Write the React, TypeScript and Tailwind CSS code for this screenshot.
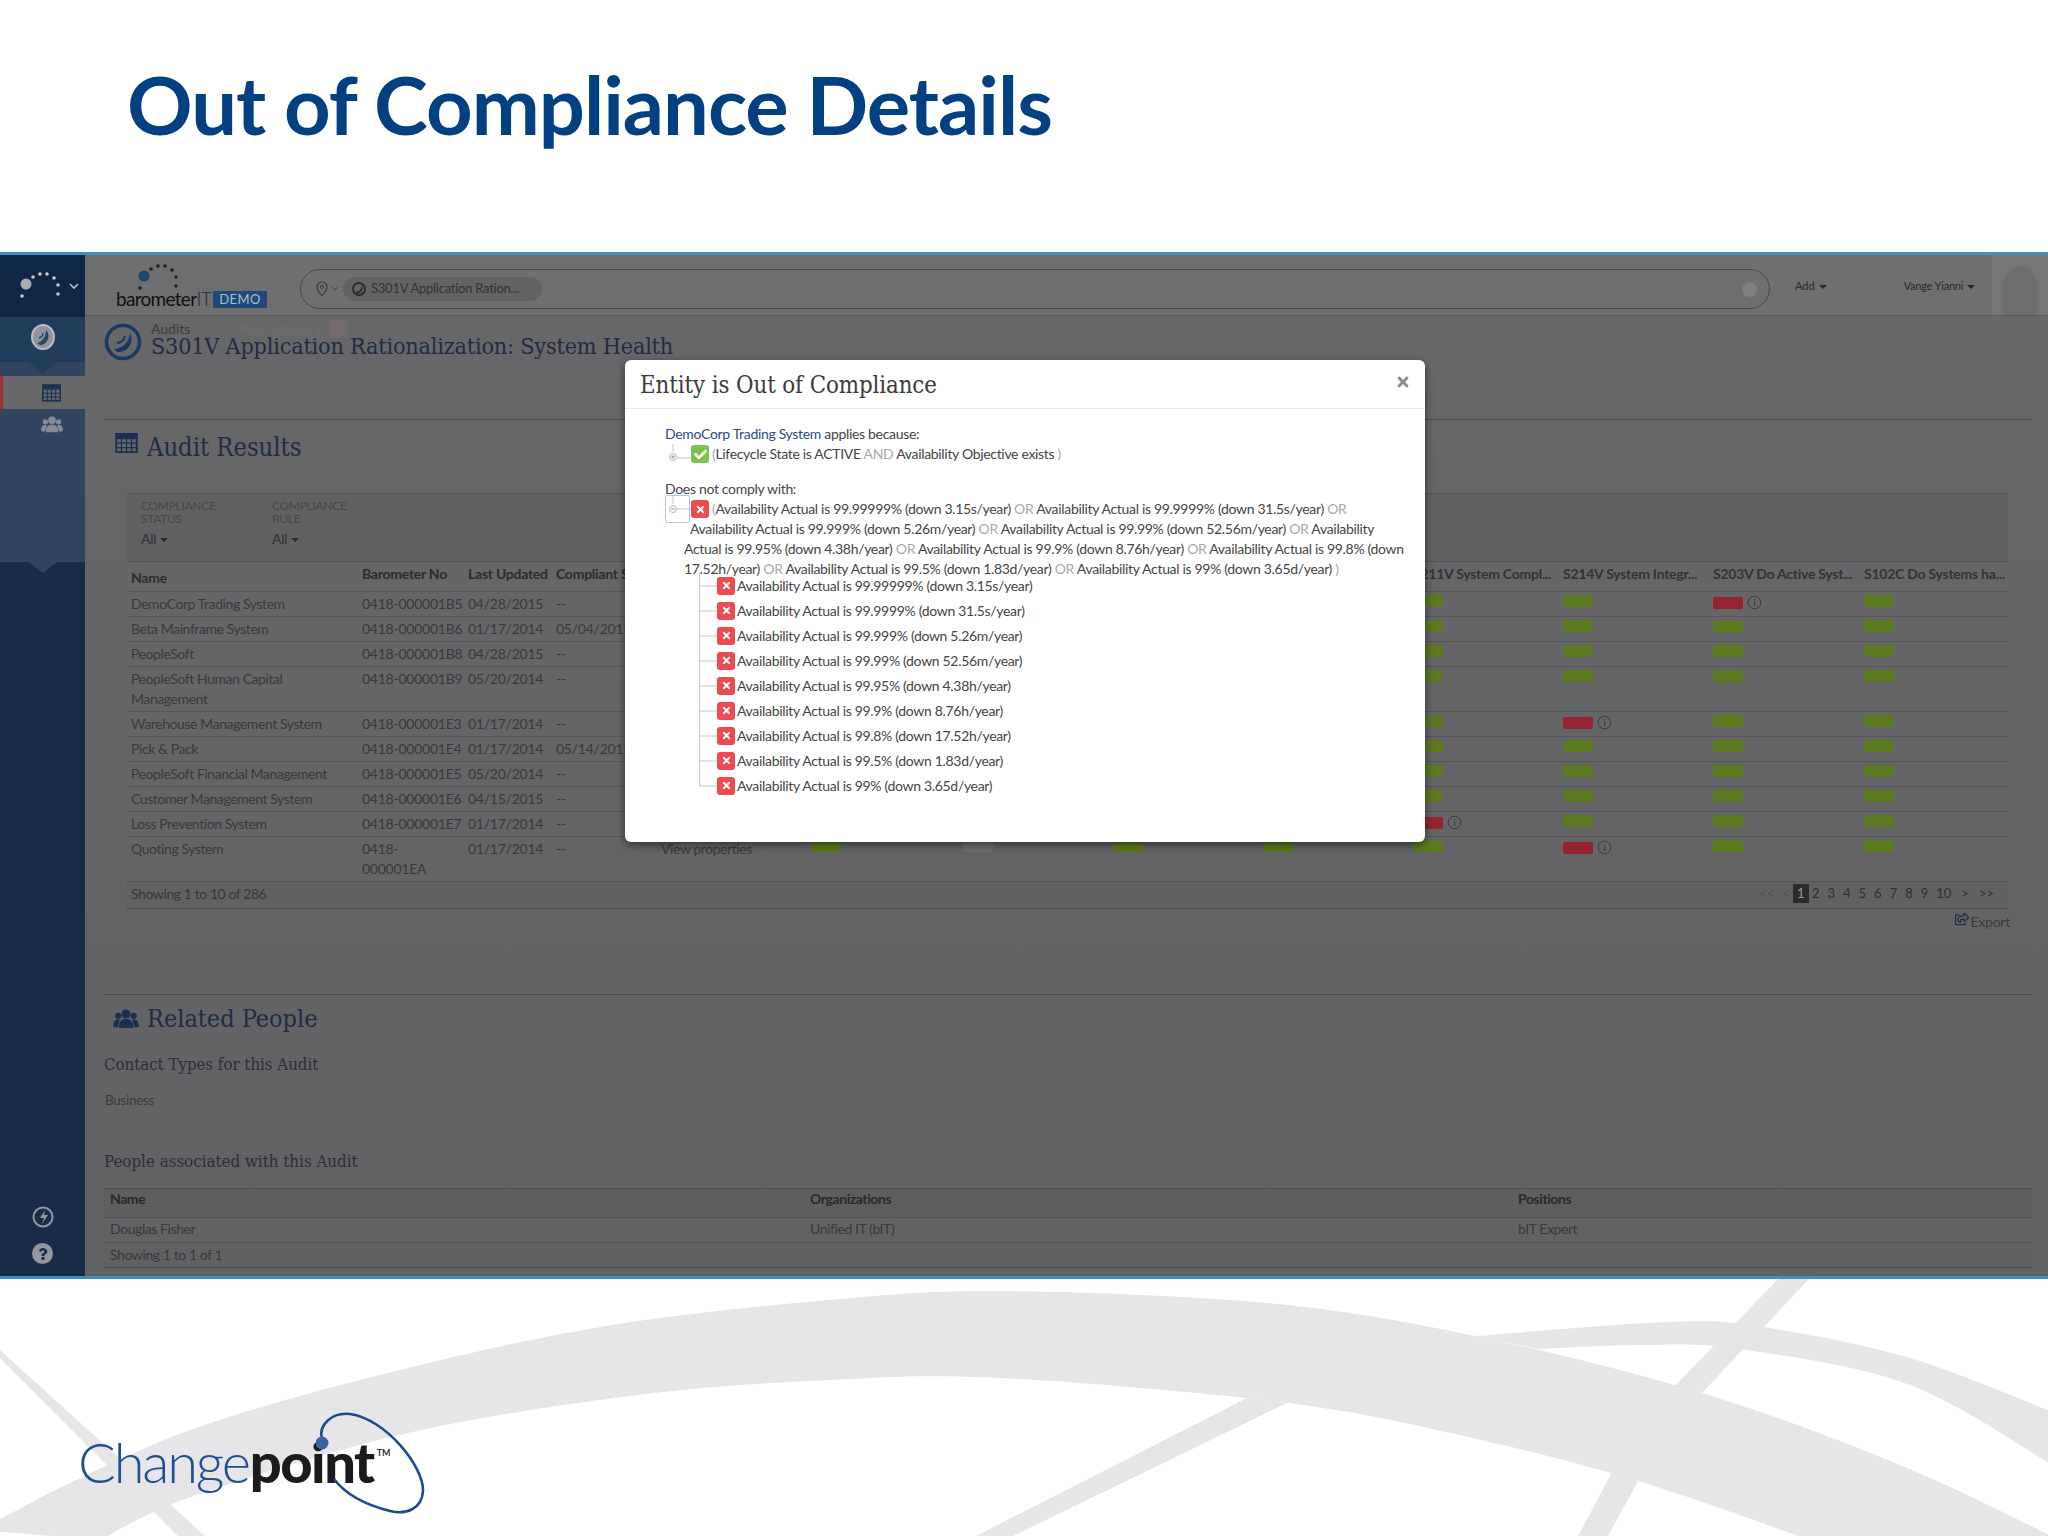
import React from "react";
import { FaCheck, FaTimes, FaRegShareSquare, FaQuestion } from "react-icons/fa";

const SLAB = "font-['DejaVu_Serif'] [font-stretch:condensed]";

type S = "g" | "r" | "x" | "n";
const rows: { name: string[]; no: string[]; upd: string; comp: string; view?: boolean; st: S[] }[] = [
  { name: ["DemoCorp Trading System"], no: ["0418-000001B5"], upd: "04/28/2015", comp: "--", st: ["g", "g", "r", "g"] },
  { name: ["Beta Mainframe System"], no: ["0418-000001B6"], upd: "01/17/2014", comp: "05/04/2015", st: ["g", "g", "g", "g"] },
  { name: ["PeopleSoft"], no: ["0418-000001B8"], upd: "04/28/2015", comp: "--", st: ["g", "g", "g", "g"] },
  { name: ["PeopleSoft Human Capital", "Management"], no: ["0418-000001B9"], upd: "05/20/2014", comp: "--", st: ["g", "g", "g", "g"] },
  { name: ["Warehouse Management System"], no: ["0418-000001E3"], upd: "01/17/2014", comp: "--", st: ["g", "r", "g", "g"] },
  { name: ["Pick & Pack"], no: ["0418-000001E4"], upd: "01/17/2014", comp: "05/14/2015", st: ["g", "g", "g", "g"] },
  { name: ["PeopleSoft Financial Management"], no: ["0418-000001E5"], upd: "05/20/2014", comp: "--", st: ["g", "g", "g", "g"] },
  { name: ["Customer Management System"], no: ["0418-000001E6"], upd: "04/15/2015", comp: "--", st: ["g", "g", "g", "g"] },
  { name: ["Loss Prevention System"], no: ["0418-000001E7"], upd: "01/17/2014", comp: "--", st: ["r", "g", "g", "g"] },
  { name: ["Quoting System"], no: ["0418-", "000001EA"], upd: "01/17/2014", comp: "--", view: true, st: ["g", "r", "g", "g"] },
];

const GRID = "grid grid-cols-[235px_106px_88px_105px_150px_152px_150px_150px_150px_150px_150px_151px_1fr] items-start";

function GridIcon({ w, h, c }: { w: number; h: number; c: string }) {
  return (
    <svg width={w} height={h} viewBox="0 0 20 18" className="shrink-0">
      <rect x="0.8" y="0.8" width="18.4" height="16.4" fill="none" stroke={c} strokeWidth="1.6" />
      <path d="M0 5H20M0 9.2H20M0 13.2H20M5.5 5V18M10 5V18M14.5 5V18" stroke={c} strokeWidth="1.1" />
      <rect x="0" y="0" width="20" height="4.5" fill={c} />
    </svg>
  );
}

function PeopleIcon({ w, h, c }: { w: number; h: number; c: string }) {
  return (
    <svg width={w} height={h} viewBox="0 0 28 22" className="shrink-0">
      <circle cx="5.5" cy="7.5" r="3.4" fill={c} />
      <circle cx="22.5" cy="7.5" r="3.4" fill={c} />
      <path d="M0 19C0 13.5 2 11.5 5.5 11.5L7 11.5L5 20H1Z" fill={c} />
      <path d="M28 19C28 13.5 26 11.5 22.5 11.5L21 11.5L23 20H27Z" fill={c} />
      <circle cx="14" cy="5.5" r="5" fill={c} />
      <path d="M6 21C6 13.5 9 11 14 11C19 11 22 13.5 22 21Z" fill={c} />
    </svg>
  );
}

function Info() {
  return (
    <svg width="15" height="15" viewBox="0 0 15 15" className="shrink-0">
      <circle cx="7.5" cy="7.5" r="6.3" fill="none" stroke="#3d3d3d" strokeWidth="1" />
      <rect x="7" y="6.5" width="1.2" height="4.5" fill="#3d3d3d" />
      <rect x="7" y="4" width="1.2" height="1.3" fill="#3d3d3d" />
    </svg>
  );
}

function Bar({ s }: { s: S }) {
  if (s === "n") return <div />;
  const c = s === "g" ? "bg-[#5c7a20]" : s === "r" ? "bg-[#962330]" : "bg-[#6f6f71]";
  return (
    <div className="flex items-center gap-[4px] pt-[1px]">
      <div className={`w-[30px] h-[12px] rounded-[2px] ${c}`} />
      {s === "r" && <Info />}
    </div>
  );
}

function TableRow({ r }: { r: (typeof rows)[number] }) {
  const mid: S[] = r.view ? ["g", "x", "g", "g"] : ["n", "n", "n", "n"];
  return (
    <div className={`${GRID} border-b border-[#565658] pt-[2px] pb-[2px] text-[14px] leading-[20px] text-[#3a3a3c] tracking-[-0.42px]`}>
      <div className="pl-[4px]">{r.name.map((n) => <div key={n}>{n}</div>)}</div>
      <div className="tracking-[-0.25px]">{r.no.map((n) => <div key={n}>{n}</div>)}</div>
      <div className="tracking-[-0.25px]">{r.upd}</div>
      <div className="tracking-[-0.25px]">{r.comp}</div>
      <div>{r.view ? "View properties" : ""}</div>
      {mid.map((s, i) => <Bar key={i} s={s} />)}
      {r.st.map((s, i) => <Bar key={"s" + i} s={s} />)}
      <div />
    </div>
  );
}

function RedX({ size = 18 }: { size?: number }) {
  return (
    <span className="inline-flex shrink-0 items-center justify-center rounded-[3px] bg-[#ee4b50] text-white" style={{ width: size, height: size }}>
      <FaTimes size={11} />
    </span>
  );
}

function Op({ children }: { children: React.ReactNode }) {
  return <span className="text-[#a9a9a9]">{children}</span>;
}

const children = [
  "99.99999% (down 3.15s/year)",
  "99.9999% (down 31.5s/year)",
  "99.999% (down 5.26m/year)",
  "99.99% (down 52.56m/year)",
  "99.95% (down 4.38h/year)",
  "99.9% (down 8.76h/year)",
  "99.8% (down 17.52h/year)",
  "99.5% (down 1.83d/year)",
  "99% (down 3.65d/year)",
];

function Modal() {
  return (
    <div className="absolute left-[625px] top-[360px] w-[800px] h-[482px] rounded-[6px] bg-white shadow-[0_3px_9px_rgba(0,0,0,0.5)] z-10 font-['Lato',sans-serif] text-[14px] leading-[20px] text-[#454545] tracking-[-0.32px]">
      <div className="flex items-center justify-between h-[49px] border-b border-[#e8e8e8] pl-[15px] pr-[14px]">
        <div className={`${SLAB} text-[23.8px] tracking-[-0.1px] text-[#3b3b3b] pt-[1px]`}>Entity is Out of Compliance</div>
        <FaTimes size={16} className="text-[#8c8c8c] mb-[5px]" />
      </div>
      <div className="pl-[40px] pt-[15px]">
        <div><span className="text-[#2b4a8b]">DemoCorp Trading System</span> applies because:</div>
        <div className="flex items-center h-[20px]">
          <svg width="26" height="20" viewBox="0 0 26 20" className="shrink-0">
            <path d="M8 0V8M12 14H26" stroke="#c4c4c4" fill="none" />
            <circle cx="8" cy="13" r="3.5" fill="none" stroke="#b5b5b5" />
            <path d="M6 13H10M8 11V15" stroke="#999" />
          </svg>
          <span className="inline-flex shrink-0 items-center justify-center w-[18px] h-[18px] rounded-[3px] bg-[#7cc24c] text-white"><FaCheck size={13} /></span>
          <span className="ml-[3px] whitespace-nowrap"><Op>(</Op>Lifecycle State is ACTIVE <Op>AND</Op> Availability Objective exists <Op>)</Op></span>
        </div>
        <div className="mt-[15px]">Does not comply with:</div>
        <div className="whitespace-nowrap">
          <div className="flex items-center h-[20px]">
            <svg width="26" height="28" viewBox="0 0 26 28" className="shrink-0 -mt-[4px] -mb-[4px]">
              <rect x="0.5" y="0.5" width="24" height="27" rx="2" fill="none" stroke="#a9c6ef" />
              <path d="M8 1V9M12 14H26" stroke="#c4c4c4" fill="none" />
              <circle cx="8" cy="14" r="3.5" fill="none" stroke="#b5b5b5" />
              <path d="M6 14H10" stroke="#999" />
            </svg>
            <RedX />
            <span className="ml-[3px]"><Op>(</Op>Availability Actual is 99.99999% (down 3.15s/year) <Op>OR</Op> Availability Actual is 99.9999% (down 31.5s/year) <Op>OR</Op></span>
          </div>
          <div className="ml-[25px]">Availability Actual is 99.999% (down 5.26m/year) <Op>OR</Op> Availability Actual is 99.99% (down 52.56m/year) <Op>OR</Op> Availability</div>
          <div className="ml-[19px]">Actual is 99.95% (down 4.38h/year) <Op>OR</Op> Availability Actual is 99.9% (down 8.76h/year) <Op>OR</Op> Availability Actual is 99.8% (down</div>
          <div className="ml-[19px]">17.52h/year) <Op>OR</Op> Availability Actual is 99.5% (down 1.83d/year) <Op>OR</Op> Availability Actual is 99% (down 3.65d/year) <Op>)</Op></div>
        </div>
        <div className="ml-[34px] -mt-[6px]">
          {children.map((c, i) => (
            <div key={c} className="flex items-center h-[25px]">
              <svg width="18" height="25" viewBox="0 0 18 25" className="shrink-0">
                <path d={i === children.length - 1 ? "M0.5 0V13H18" : "M0.5 0V25M0.5 13H18"} stroke="#c8c8c8" fill="none" />
              </svg>
              <RedX />
              <span className="ml-[2px] whitespace-nowrap">Availability Actual is {c}</span>
            </div>
          ))}
        </div>
      </div>
    </div>
  );
}

function smooth(pts: number[][]) {
  let d = "";
  for (let i = 0; i < pts.length - 1; i++) {
    const p0 = pts[i - 1] || pts[i];
    const p1 = pts[i];
    const p2 = pts[i + 1];
    const p3 = pts[i + 2] || p2;
    const c1 = [p1[0] + (p2[0] - p0[0]) / 6, p1[1] + (p2[1] - p0[1]) / 6];
    const c2 = [p2[0] - (p3[0] - p1[0]) / 6, p2[1] - (p3[1] - p1[1]) / 6];
    d += `C${c1[0]} ${c1[1]} ${c2[0]} ${c2[1]} ${p2[0]} ${p2[1]} `;
  }
  return d;
}

function Swooshes() {
  const up = [[-20, 1530], [80, 1478], [210, 1423], [408, 1368], [612, 1325], [829, 1300], [1000, 1291], [1267, 1303], [1475, 1336], [1702, 1393], [1900, 1465], [2060, 1540]];
  const low = [[1810, 1540], [1638, 1481], [1468, 1437], [1287, 1403], [1000, 1378], [829, 1380], [638, 1395], [408, 1433], [191, 1497], [100, 1540]];
  const archOut = [[1475, 1336], [1668, 1322], [1762, 1327], [1910, 1358], [2060, 1415]];
  const archIn = [[2060, 1470], [1910, 1385], [1739, 1349], [1642, 1345], [1538, 1349]];
  return (
    <svg className="absolute left-0 top-0" width="2048" height="1536" viewBox="0 0 2048 1536">
      <g fill="#e6e6e8">
        <path d={`M${up[0].join(" ")} ${smooth(up)} L${low[0].join(" ")} ${smooth(low)} Z`} />
        <path d={`M${archOut[0].join(" ")} ${smooth(archOut)} L${archIn[0].join(" ")} ${smooth(archIn)} Z`} />
        <path d="M1779 1278 L1810 1278 L1702 1393 L1674 1387 Z" />
        <path d="M1612 1472 L1638 1481 L1608 1536 L1578 1536 Z" />
        <path d="M1247 1398 L1287 1403 L1013 1536 L976 1536 Z" />
        <path d="M0 1350 L205 1536 L178 1536 L0 1358 Z" />
      </g>
    </svg>
  );
}

function Dots({ big = "#4a4a4c", small = "#4a4a4c" }: { big?: string; small?: string }) {
  return (
    <svg width="46" height="30" viewBox="0 0 46 30">
      <circle cx="6" cy="13" r="5.5" fill={big} />
      <circle cx="13" cy="6" r="1.8" fill={small} />
      <circle cx="20" cy="3" r="1.8" fill={small} />
      <circle cx="27" cy="3" r="1.8" fill={small} />
      <circle cx="34" cy="7" r="1.8" fill={small} />
      <circle cx="38" cy="14" r="1.8" fill={small} />
      <circle cx="38" cy="23" r="1.8" fill={small} />
      <circle cx="2" cy="25" r="1.8" fill={small} />
    </svg>
  );
}

function Down({ c = "#2a2a2c" }: { c?: string }) {
  return <span className="inline-block w-0 h-0 border-x-[4px] border-x-transparent border-t-[4px] ml-[4px] align-middle" style={{ borderTopColor: c }} />;
}

function Sidebar() {
  return (
    <div className="w-[85px] shrink-0 flex flex-col bg-[#192c47]">
      <div className="h-[62px] bg-[#0f2644] flex items-center pl-[20px] gap-[3px]">
        <Dots big="#a9adb3" small="#c9ccd1" />
        <svg width="10" height="7" viewBox="0 0 10 7"><path d="M1 1L5 5L9 1" stroke="#b9bcc2" strokeWidth="1.6" fill="none" /></svg>
      </div>
      <div className="h-[45px] bg-[#223c5b] flex items-start justify-center pt-[6px]">
        <svg width="26" height="28" viewBox="0 0 26 28">
          <ellipse cx="13" cy="14" rx="11" ry="12" fill="#8f949c" stroke="#b8bbc0" strokeWidth="2" />
          <path d="M7 20C12 19 16 14 16 7C21 12 18 22 10 22Z" fill="#2a4566" />
          <path d="M9 15C12 14 13 12 13 10" stroke="#2a4566" strokeWidth="1.4" fill="none" />
        </svg>
      </div>
      <div className="h-[14px] bg-[#31455f] flex justify-center">
        <div className="w-0 h-0 border-x-[14px] border-x-transparent border-t-[12px] border-t-[#223c5b]" />
      </div>
      <div className="h-[33px] bg-[#67676a] border-l-[3px] border-[#9c3433] flex items-center pl-[39px]">
        <GridIcon w={19} h={18} c="#1b3350" />
      </div>
      <div className="h-[153px] bg-[#31455f] pt-[7px] pl-[41px]">
        <PeopleIcon w={22} h={17} c="#878b93" />
      </div>
      <div className="flex justify-center">
        <div className="w-0 h-0 border-x-[14px] border-x-transparent border-t-[11px] border-t-[#31455f]" />
      </div>
      <div className="mt-auto flex flex-col items-center gap-[15px] pb-[12px]">
        <svg width="22" height="22" viewBox="0 0 22 22">
          <circle cx="11" cy="11" r="9.5" fill="none" stroke="#92969d" strokeWidth="2" />
          <path d="M13 4L8 12H12L10 18L16 9H12Z" fill="#92969d" />
        </svg>
        <span className="w-[21px] h-[21px] rounded-full bg-[#92969d] flex items-center justify-center text-[#192c47]"><FaQuestion size={12} /></span>
      </div>
    </div>
  );
}

function TopBar() {
  return (
    <div className="h-[61px] shrink-0 bg-[#6f6f70] border-b border-[#5a5a5c] flex items-center font-['Lato',sans-serif]">
      <div className="ml-[31px] w-[184px] shrink-0 flex flex-col mt-[6px]">
        <div className="pl-[22px] -mb-[8px]"><Dots big="#1f4568" small="#202022" /></div>
        <div className="flex items-center">
          <span className="text-[19px] tracking-[-0.7px] text-[#111]">barometer</span>
          <span className="text-[19px] font-light tracking-[-0.6px] text-[#1f2a38]">IT</span>
          <span className="ml-[2px] px-[6px] h-[17px] leading-[17px] bg-[#1f4a78] text-[13px] tracking-[0.5px] text-[#a9bdd2]">DEMO</span>
        </div>
      </div>
      <div className="w-[1470px] h-[40px] mt-[8px] shrink-0 rounded-full border border-[#4a4a4c] flex items-center pl-[14px] pr-[12px]">
        <svg width="14" height="16" viewBox="0 0 14 16" className="shrink-0">
          <path d="M7 15C3 10 2 8 2 6a5 5 0 0110 0C12 8 11 10 7 15Z" fill="none" stroke="#3f3f41" strokeWidth="1.2" />
          <circle cx="7" cy="6" r="1.6" fill="none" stroke="#3f3f41" />
        </svg>
        <svg width="8" height="6" viewBox="0 0 8 6" className="ml-[2px]"><path d="M1 1L4 4L7 1" stroke="#3f3f41" fill="none" /></svg>
        <div className="ml-[4px] w-[199px] h-[24px] rounded-full bg-[#636365] flex items-center pl-[9px] text-[13px] text-[#333335] tracking-[-0.25px] whitespace-nowrap">
          <svg width="14" height="14" viewBox="0 0 14 14" className="mr-[5px] shrink-0">
            <circle cx="7" cy="7" r="6" fill="none" stroke="#2b2b2d" strokeWidth="2" />
            <path d="M3 10C7 10 10 7 10 3C12 7 9 12 5 11Z" fill="#2b2b2d" />
          </svg>
          S301V Application Ration...
        </div>
        <span className="ml-auto w-[15px] h-[15px] rounded-full bg-[#807f81]" />
      </div>
      <div className="ml-[25px] mt-[2px] text-[11px] text-[#2a2a2c]">Add<Down /></div>
      <div className="ml-[77px] mt-[2px] text-[11px] text-[#2a2a2c] whitespace-nowrap tracking-[-0.2px]">Vange Yianni<Down /></div>
      <div className="ml-auto w-[56px] h-full bg-[#767677] flex items-end justify-center overflow-hidden">
        <div className="w-[34px] h-[48px] rounded-t-full bg-[#6e6e6f]" />
      </div>
    </div>
  );
}

function AuditHeader() {
  return (
    <div className="h-[104px] shrink-0 mx-[19px] mr-[16px] border-b border-[#4e4e50] flex items-start pt-[7px]">
      <svg width="38" height="38" viewBox="0 0 38 38" className="shrink-0">
        <circle cx="19" cy="19" r="16.5" fill="none" stroke="#1a3a63" strokeWidth="3.5" />
        <path d="M10 26C17 26 25 20 26 10C31 19 24 30 13 29Z" fill="#1a3a63" />
        <path d="M13 20C17 20 20 17 21 13" fill="none" stroke="#1a3a63" strokeWidth="2" />
      </svg>
      <div className="ml-[9px] -mt-[1px]">
        <div className="flex items-center h-[13px] text-[14px] leading-[13px] text-[#3c3c3e] font-['Lato',sans-serif]">
          Audits
          <span className="ml-[50px] text-[#6f6e70] tracking-[-0.2px]">Any Category</span>
          <span className="ml-[8px] w-[18px] h-[18px] bg-[#726a6b]" />
        </div>
        <div className={`${SLAB} text-[23.2px] leading-[21px] tracking-[-0.2px] text-[#1f2c44] whitespace-nowrap`}>S301V Application Rationalization: System Health</div>
      </div>
    </div>
  );
}

function Results() {
  const head = "pt-[3px] text-[14px] tracking-[-0.25px] text-[#333335]";
  return (
    <div className="font-['Lato',sans-serif]">
      <div className="h-[73px] flex items-start pl-[30px] pt-[13px]">
        <GridIcon w={23} h={20} c="#1b2f52" />
        <span className={`${SLAB} text-[25.3px] leading-[24px] mt-[3px] ml-[9px] text-[#1f2c44]`}>Audit Results</span>
      </div>
      <div className="mx-[42px] w-[1881px]">
        <div className="h-[69px] bg-[#616163] border-t border-[#555557] border-b pl-[14px] pt-[5px] flex text-[#484849]">
          <div className="w-[131px] text-[12px] leading-[13px] tracking-[-0.3px]">
            <div>COMPLIANCE<br />STATUS</div>
            <div className="mt-[5px] text-[14px] leading-[18px] text-[#303032]">All<Down /></div>
          </div>
          <div className="text-[12px] leading-[13px] tracking-[-0.3px]">
            <div>COMPLIANCE<br />RULE</div>
            <div className="mt-[5px] text-[14px] leading-[18px] text-[#303032]">All<Down /></div>
          </div>
        </div>
        <div className={`${GRID} h-[30px] border-b border-[#565658] text-[14px] font-bold tracking-[-0.25px] text-[#2c2c2e] leading-[18px] whitespace-nowrap`}>
          <div className="pl-[4px] pt-[7px]">Name</div>
          <div className="pt-[3px]">Barometer No</div>
          <div className="pt-[3px]">Last Updated</div>
          <div className="pt-[3px]">Compliant S</div>
          <div />
          <div /><div /><div /><div />
          <div className={head}>S211V System Compl...</div>
          <div className={head}>S214V System Integr...</div>
          <div className={head}>S203V Do Active Syst...</div>
          <div className={head}>S102C Do Systems ha...</div>
        </div>
        {rows.map((r) => <TableRow key={r.upd + r.name[0]} r={r} />)}
        <div className="h-[27px] bg-[#616163] border-b border-[#4e4e50] flex items-center justify-between pl-[4px] pr-[14px] pb-[3px] text-[14px] tracking-[-0.42px] text-[#38383a]">
          <span>Showing 1 to 10 of 286</span>
          <div className="flex items-center text-[13px] gap-[8px] tracking-normal text-[#2f2f31]">
            <span className="text-[#4e4e50]">&lt;&lt;</span>
            <span className="text-[#4e4e50]">&lt;</span>
            <span className="w-[16px] h-[19px] bg-[#2b2b2d] text-[#9a9a9c] text-center leading-[19px] -ml-[5px] -mr-[5px]">1</span>
            {["2", "3", "4", "5", "6", "7", "8", "9", "10"].map((p) => <span key={p} className="min-w-[7px]">{p}</span>)}
            <span className="ml-[2px]">&gt;</span>
            <span className="ml-[2px]">&gt;&gt;</span>
          </div>
        </div>
        <div className="flex justify-end items-center gap-[2px] h-[20px] mt-[2px] -mr-[2px] text-[14px] tracking-[-0.25px] text-[#3c3c3e]">
          <FaRegShareSquare size={14} className="text-[#1f2c44] -mt-[4px]" />Export
        </div>
      </div>
    </div>
  );
}

function People() {
  const cols = "grid grid-cols-[700px_708px_1fr] pl-[6px]";
  return (
    <div className="mt-[63px] mx-[19px] mr-[16px] border-t border-[#4e4e50] font-['Lato',sans-serif]">
      <div className="flex items-center h-[50px] pl-[9px] pb-[3px]">
        <PeopleIcon w={26} h={20} c="#1b2f52" />
        <span className={`${SLAB} text-[25px] ml-[8px] text-[#1f2c44]`}>Related People</span>
      </div>
      <div className={`${SLAB} text-[16.7px] text-[#2b2f3a] leading-[22px] mt-[8px]`}>Contact Types for this Audit</div>
      <div className="text-[13.5px] leading-[18px] tracking-[-0.3px] text-[#3c3c3e] mt-[16px] pl-[1px]">Business</div>
      <div className={`${SLAB} text-[16.8px] text-[#2b2f3a] leading-[22px] mt-[41px]`}>People associated with this Audit</div>
      <div className="mt-[16px] text-[14px] tracking-[-0.42px] text-[#3a3a3c]">
        <div className={`${cols} h-[30px] items-start leading-[20px] bg-[#5e5e60] border-y border-[#535355] font-bold text-[#29292b]`}>
          <div>Name</div><div>Organizations</div><div>Positions</div>
        </div>
        <div className={`${cols} h-[25px] leading-[21px] border-b border-[#535355]`}>
          <div>Douglas Fisher</div><div>Unified IT (bIT)</div><div>bIT Expert</div>
        </div>
        <div className={`${cols} h-[25px] leading-[23px] bg-[#616163] border-b border-[#4e4e50]`}>
          <div>Showing 1 to 1 of 1</div>
        </div>
      </div>
    </div>
  );
}

function Logo() {
  return (
    <div className="relative z-[1] h-full pl-[78px] pt-[150px]">
      <div className="relative inline-flex items-baseline font-['Lato',sans-serif] text-[56px] leading-[66px] tracking-[-2.2px]">
        <span className="font-light text-[#1f4e92]">Change</span>
        <span className="font-black text-[#1b1b1d] ml-[1px] tracking-[-1.5px]">point</span>
        <span className="self-start mt-[19px] ml-[3px] text-[9px] leading-[10px] tracking-normal font-bold text-[#333]">TM</span>
        <svg className="absolute left-[238px] top-[-18px]" width="112" height="108" viewBox="0 0 112 108">
          <path d="M6 28 C2 14 16 1 34 3 C70 8 108 56 107 80 C106 98 90 104 74 100 C50 94 30 84 18 68" fill="none" stroke="#1f4a8c" strokeWidth="2.6" />
          <circle cx="6" cy="32" r="6.5" fill="#3a639f" />
        </svg>
      </div>
    </div>
  );
}

export default function App() {
  return (
    <div className="relative w-[2048px] h-[1536px] overflow-hidden bg-white">
      <Swooshes />
      <div className="relative h-[252px] pl-[127px] pt-[54px]">
        <h1 className="font-['Lato',sans-serif] font-bold text-[81.3px] leading-[100px] tracking-[-1px] text-[#034082]">Out of Compliance Details</h1>
      </div>
      <div className="relative h-[1027px] border-y-[3px] border-[#3b90c9] flex bg-gradient-to-b from-[#686769] to-[#626163] overflow-hidden">
        <Sidebar />
        <div className="flex-1 min-w-0 flex flex-col">
          <TopBar />
          <AuditHeader />
          <Results />
          <People />
        </div>
      </div>
      <div className="h-[257px]"><Logo /></div>
      <Modal />
    </div>
  );
}
